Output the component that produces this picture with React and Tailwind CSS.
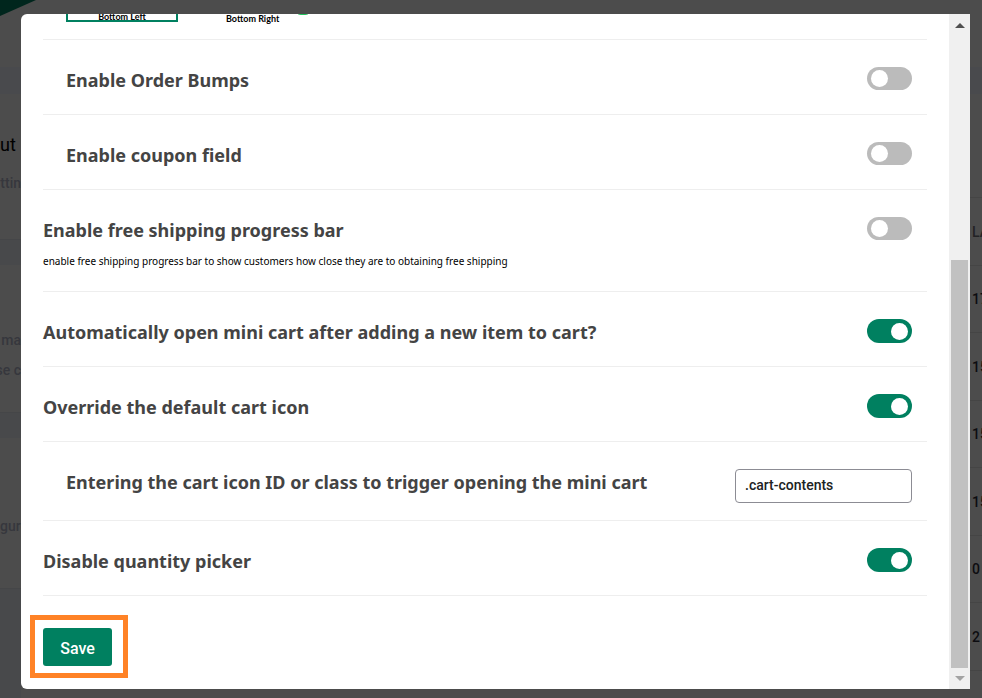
import React from "react";

const Toggle = ({ id, on }) => (
  <input
    id={id}
    type="checkbox"
    defaultChecked={on}
    className="relative h-[23px] w-[45px] shrink-0 cursor-pointer appearance-none rounded-full bg-[#bbbbbb] before:absolute before:left-1 before:top-[3px] before:size-[17px] before:rounded-full before:bg-white checked:h-6 checked:bg-[#008060] checked:before:left-6 checked:before:top-1"
  />
);

const SettingRow = ({ id, label, note, indent, children }) => (
  <div
    className={`flex items-start justify-between border-b border-[#eeeeee] pr-[15px] ${
      indent ? "pl-[23px]" : ""
    }`}
  >
    <div className="pt-7 pb-[22px]">
      <label
        htmlFor={id}
        className="block font-['Noto_Sans',sans-serif] text-lg leading-6 font-bold text-[#444444]"
      >
        {label}
      </label>
      {note && (
        <p className="pt-[11px] font-['Noto_Sans',sans-serif] text-[10px] leading-4 text-black">
          {note}
        </p>
      )}
    </div>
    <div className="flex pt-[27px]">{children}</div>
  </div>
);

const PositionPicker = () => (
  <div className="h-[26px] overflow-hidden border-b border-[#eeeeee] pl-[23px] font-[Lato,sans-serif] text-[9px] leading-[10px] font-bold text-black">
    <div className="flex items-start">
      <label className="-mt-1 h-3 w-28 border-x-2 border-b-2 border-[#008060] text-center">
        <input type="radio" name="position" defaultChecked className="sr-only" />
        <span className="block pt-[2px]">Bottom Left</span>
      </label>
      <label className="ml-12 block">
        <input type="radio" name="position" className="sr-only" />
        <span>Bottom Right</span>
      </label>
      <svg className="ml-[18px] h-px w-3" viewBox="0 0 12 1">
        <ellipse cx="6" cy="0" rx="5" ry="1" fill="#22c55e" />
      </svg>
    </div>
  </div>
);

const Scrollbar = () => (
  <div className="flex w-[21px] shrink-0 flex-col items-center bg-[#f0f0f0]">
    <div className="flex h-[21px] items-center justify-center pt-[2px]">
      <svg width="10" height="6" viewBox="0 0 10 6">
        <path d="M5 0 L10 5 H0 Z" fill="#505050" />
      </svg>
    </div>
    <div className="grow-[225]" />
    <div className="w-[17px] grow-[408] bg-[#c1c1c1]" />
    <div className="flex h-[21px] items-center justify-center">
      <svg width="10" height="6" viewBox="0 0 10 6">
        <path d="M0 0 H10 L5 5 Z" fill="#a3a3a3" />
      </svg>
    </div>
  </div>
);

const days = ["17", "15", "15", "15", "0", "2"];

const Backdrop = () => (
  <div className="absolute inset-0 flex justify-between overflow-hidden bg-[#4c4c4c] font-[Roboto,sans-serif]">
    <div className="flex w-[21px] flex-col text-sm leading-[30px] font-medium whitespace-nowrap text-[#36373d]">
      <svg className="shrink-0 overflow-visible" width="21" height="67" viewBox="0 0 21 67">
        <path d="M0 0 H36 L0 16 Z" fill="#00261d" />
      </svg>
      <div className="h-[27px] shrink-0 bg-[#494a4d]" />
      <div className="h-[145px] shrink-0 pt-9">
        <p className="text-lg leading-[30px] font-normal text-black">ut</p>
        <p className="flex justify-end pt-2">ttin</p>
      </div>
      <div className="h-[26px] shrink-0 border-t border-[#454648] bg-[#48494b]" />
      <div className="h-[147px] shrink-0 pt-[60px]">
        <p className="flex justify-end">o ma</p>
        <p className="flex justify-end">se c</p>
      </div>
      <div className="h-[26px] shrink-0 border-t border-[#454648] bg-[#48494b]" />
      <div className="h-[150px] shrink-0 pt-[73px]">
        <p>gure</p>
      </div>
      <div className="grow border-t border-[#454648] bg-[#48494b]" />
    </div>
    <div className="w-3">
      <div className="h-[67px]" />
      <div className="h-[27px] bg-[#494a4d]" />
      <table className="mt-[103px] w-10 border-collapse text-left text-sm font-medium text-[#0c0c10]">
        <thead>
          <tr className="h-[68px] border-y border-[#454545]">
            <th className="pl-[2px] font-medium text-[#222224]">LA</th>
          </tr>
        </thead>
        <tbody>
          {days.map((day, i) => (
            <tr key={i} className="h-[67px] border-b border-[#454545] even:h-[68px]">
              <td className="pl-[2px]">{day}</td>
            </tr>
          ))}
        </tbody>
      </table>
    </div>
  </div>
);

const App = () => {
  return (
    <div className="relative min-h-screen">
      <Backdrop />
      <div className="relative flex min-h-screen pt-[14px] pr-3 pb-[9px] pl-[21px]">
        <main className="flex grow overflow-hidden rounded-l-md bg-white">
          <form className="grow px-[22px]" onSubmit={(e) => e.preventDefault()}>
            <PositionPicker />
            <SettingRow id="bumps" label="Enable Order Bumps" indent>
              <Toggle id="bumps" />
            </SettingRow>
            <SettingRow id="coupon" label="Enable coupon field" indent>
              <Toggle id="coupon" />
            </SettingRow>
            <SettingRow
              id="shipping"
              label="Enable free shipping progress bar"
              note="enable free shipping progress bar to show customers how close they are to obtaining free shipping"
            >
              <Toggle id="shipping" />
            </SettingRow>
            <SettingRow
              id="autoOpen"
              label="Automatically open mini cart after adding a new item to cart?"
            >
              <Toggle id="autoOpen" on />
            </SettingRow>
            <SettingRow id="override" label="Override the default cart icon">
              <Toggle id="override" on />
            </SettingRow>
            <SettingRow
              id="selector"
              label="Entering the cart icon ID or class to trigger opening the mini cart"
              indent
            >
              <input
                id="selector"
                type="text"
                defaultValue=".cart-contents"
                className="mb-[17px] h-[34px] w-[177px] rounded border border-[#8c8c94] bg-white px-[9px] pb-[2px] font-[Roboto,sans-serif] text-sm font-medium text-[#202223]"
              />
            </SettingRow>
            <SettingRow id="quantity" label="Disable quantity picker">
              <Toggle id="quantity" on />
            </SettingRow>
            <div className="-ml-[13px] mt-[19px] w-fit border-[5px] border-[#ff8226] pt-2 pr-[11px] pb-[7px] pl-2">
              <button
                type="submit"
                className="block h-[38px] w-[69px] rounded-[3px] bg-[#008060] pt-1 font-[Roboto,sans-serif] text-base leading-6 font-medium text-white"
              >
                Save
              </button>
            </div>
          </form>
          <Scrollbar />
        </main>
      </div>
    </div>
  );
};

export default App;
